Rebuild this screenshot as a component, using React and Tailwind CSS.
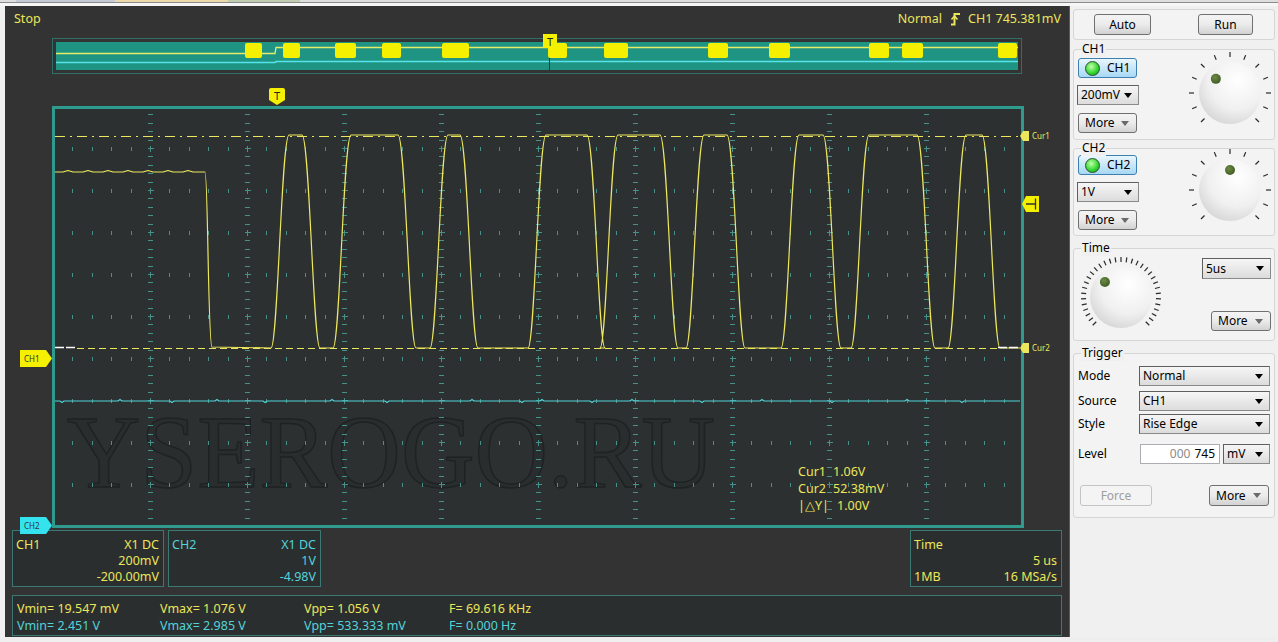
import React from 'react';

const YEL = '#ece65c';
const CYA = '#52d3da';

function buildGrid() {
  const els = [];
  for (let i = 1; i <= 9; i++) {
    const x = 53 + 97 * i + 0.5;
    for (let k = 1; k < 50; k++) {
      if (k % 5 === 0) continue;
      const y = Math.round(106 + 8.4 * k) + 0.5;
      if (y > 524) break;
      els.push(<line key={`v${i}-${k}`} x1={x - 2.5} x2={x + 2.5} y1={y} y2={y} />);
    }
  }
  for (let j = 1; j <= 9; j++) {
    const y = 106 + 42 * j + 0.5;
    for (let k = 1; k < 52; k++) {
      const x = Math.round(53 + 19.4 * k) + 0.5;
      if (x > 1019) break;
      if (k % 5 === 0) {
        els.push(<path key={`p${j}-${k}`} d={`M${x - 3},${y}H${x + 3}M${x},${y - 3}V${y + 3}`} />);
      } else {
        els.push(<line key={`h${j}-${k}`} x1={x} x2={x} y1={y - 2} y2={y + 2} />);
      }
    }
  }
  return (
    <g stroke="#46918a" strokeWidth="1" shapeRendering="crispEdges">
      {els}
    </g>
  );
}

function wavePath() {
  const lo = 348;
  const hi = 135;
  let d = 'M55,172';
  for (let x = 58; x < 204; x += 5) {
    d += ` L${x},${172 + (((x * 7) % 4 === 0) ? -1.5 : 0)}`;
  }
  d += ` L205,172 C208,172 208,346 212,347 L${270},${lo}`;
  const tops = [
    [289, 302],
    [351, 398],
    [448, 460],
    [546, 587],
    [618, 660],
    [704, 727],
    [799, 823],
    [869, 917],
    [966, 982],
  ];
  const w = 18;
  tops.forEach(([a, b]) => {
    d += ` L${a - w},${lo} C${a - w * 0.62},${lo} ${a - w * 0.42},${hi} ${a},${hi} L${b},${hi} C${b + w * 0.42},${hi} ${b + w * 0.62},${lo} ${b + w},${lo}`;
  });
  d += ` L1020,${lo}`;
  return d;
}

function cyanPath() {
  let d = 'M55,401';
  const bumps = [60, 118, 170, 215, 263, 330, 385, 470, 520, 540, 590, 630, 700, 760, 830, 905, 960];
  bumps.forEach((b, i) => {
    d += ` L${b},401 L${b + 2},${i % 2 ? 399.5 : 402.5} L${b + 4},401`;
  });
  d += ' L1020,401';
  return d;
}

function Knob({ w, h, cx, cy, r = 31, ticks, tr1, tr2, dotA, dotD = 20, id }) {
  const lines = [];
  for (let i = 0; i < ticks; i++) {
    const a = ((225 - (270 * i) / (ticks - 1)) * Math.PI) / 180;
    lines.push(
      <line
        key={i}
        x1={cx + tr1 * Math.cos(a)}
        y1={cy - tr1 * Math.sin(a)}
        x2={cx + tr2 * Math.cos(a)}
        y2={cy - tr2 * Math.sin(a)}
      />
    );
  }
  const da = (dotA * Math.PI) / 180;
  return (
    <svg width={w} height={h} className="shrink-0">
      <defs>
        <radialGradient id={id} cx="0.62" cy="0.3" r="0.85">
          <stop offset="0" stopColor="#ffffff" />
          <stop offset="0.55" stopColor="#f0f0f0" />
          <stop offset="1" stopColor="#cdcdcd" />
        </radialGradient>
        <radialGradient id={`${id}d`} cx="0.4" cy="0.35" r="0.7">
          <stop offset="0" stopColor="#6b8a45" />
          <stop offset="1" stopColor="#3f5a22" />
        </radialGradient>
      </defs>
      <g stroke="#2a2a2a" strokeWidth="1.2">{lines}</g>
      <circle cx={cx} cy={cy} r={r} fill={`url(#${id})`} />
      <circle cx={cx + dotD * Math.cos(da)} cy={cy - dotD * Math.sin(da)} r="5" fill={`url(#${id}d)`} />
    </svg>
  );
}

function Tri({ color = '#000' }) {
  return (
    <svg width="8" height="5" className="shrink-0">
      <path d="M0 0H8L4 5Z" fill={color} />
    </svg>
  );
}

function Combo({ text, className = '' }) {
  return (
    <div
      className={`h-[20px] flex items-center justify-between pl-[3px] pr-[6px] border border-[#8a8a8a] border-t-[#5f5f5f] border-l-[#5f5f5f] bg-linear-to-b from-[#f6f6f6] to-[#dcdcdc] text-[12px] leading-none text-black ${className}`}
    >
      <span>{text}</span>
      <Tri />
    </div>
  );
}

function Btn({ children, className = '' }) {
  return (
    <div
      className={`flex items-center justify-center rounded-[3px] border border-[#707070] bg-linear-to-b from-[#f4f4f4] via-[#ebebeb] to-[#d2d2d2] text-[12px] leading-none text-black ${className}`}
    >
      {children}
    </div>
  );
}

function More({ className = '' }) {
  return (
    <div
      className={`h-[20px] flex items-center justify-between pl-[6px] pr-[7px] rounded-[3px] border border-[#707070] bg-linear-to-b from-[#f4f4f4] via-[#ebebeb] to-[#d2d2d2] text-[12px] leading-none text-black ${className}`}
    >
      <span>More</span>
      <Tri color="#6a6a6a" />
    </div>
  );
}

function Toggle({ label }) {
  return (
    <div className="w-[59px] h-[20px] rounded-[3px] border border-[#3c7fb1] bg-linear-to-b from-[#e9f6fd] to-[#a7d8f4] flex items-center pl-[6px] gap-[7px] text-[12px] leading-none text-black">
      <span className="w-[15px] h-[15px] rounded-full border border-[#2d4d2d] bg-[radial-gradient(circle_at_40%_35%,#c6ffa8,#36d936_55%,#129612)]" />
      <span>{label}</span>
    </div>
  );
}

function Group({ title, className = '', children }) {
  return (
    <div className={`relative rounded-[3px] border border-[#d6d6d6] bg-[#f3f3f3] ${className}`}>
      {title && (
        <span className="absolute left-[7px] top-[-9px] px-[1px] bg-[#f0f0f0] text-[12px] leading-[16px] text-black">
          {title}
        </span>
      )}
      {children}
    </div>
  );
}

function InfoBox({ color, rows, className = '' }) {
  return (
    <div className={`h-[57px] border border-[#3c7874] bg-[#2b2e2e] pt-[6px] pl-[3px] pr-[4px] ${className}`} style={{ color }}>
      {rows.map((r, i) => (
        <div key={i} className="flex justify-between leading-[16px]">
          <span>{r[0]}</span>
          <span>{r[1]}</span>
        </div>
      ))}
    </div>
  );
}

function Marker({ fill, label, className }) {
  return (
    <div className={`absolute w-[32px] h-[17px] ${className}`}>
      <svg width="32" height="17" className="absolute inset-0">
        <path d="M0 0H26L32 8.5L26 17H0Z" fill={fill} />
      </svg>
      <span className="absolute left-[4px] top-[3px] text-[8px] leading-[11px] text-[#333]">{label}</span>
    </div>
  );
}

function CurMarker({ label, className }) {
  return (
    <div className={`absolute flex items-center gap-[3px] ${className}`}>
      <svg width="9" height="10">
        <path d="M0 5L3 0H9V10H3Z" fill={YEL} />
      </svg>
      <span className="text-[8px] leading-[10px]" style={{ color: YEL }}>
        {label}
      </span>
    </div>
  );
}

export default function App() {
  return (
    <div className="w-[1278px] h-[642px] overflow-hidden bg-[#f0f0f0] flex flex-col font-['Noto_Sans',sans-serif]">
      {/* window top strip */}
      <div className="h-[6px] shrink-0 flex flex-col">
        <div className="h-[2px] bg-[#dedede] flex">
          <div className="w-[16px]" />
          <div className="w-[99px] bg-[#c4cbd6]" />
          <div className="w-[113px] bg-[#eed8a8]" />
          <div className="w-[72px] bg-[#c0cdb2]" />
        </div>
        <div className="h-[1px] bg-[#8c8c8c]" />
        <div className="h-[3px] bg-[#f6f6f6]" />
      </div>

      <div className="flex h-[631px] shrink-0">
        {/* LEFT: scope display */}
        <div className="ml-[5px] w-[1064px] bg-[#333333] flex flex-col text-[12.5px]">
          <div className="h-[32px] pt-[5px] pl-[9px] pr-[8px] flex items-start justify-between leading-[16px]" style={{ color: YEL }}>
            <span>Stop</span>
            <div className="h-[16px] flex items-center">
              <span>Normal</span>
              <svg width="11" height="16" className="ml-[8px] mr-[7px]">
                <path d="M1 13.5H4.5V3H10" stroke={YEL} strokeWidth="2" fill="none" />
                <path d="M1.5 8.5L4.5 5L7.5 8.5" stroke={YEL} strokeWidth="1.6" fill="none" />
              </svg>
              <span>CH1 745.381mV</span>
            </div>
          </div>

          {/* overview strip */}
          <div className="relative ml-[47px] w-[970px] h-[36px] border border-[#2f6e69] p-[3px]">
            <div className="w-full h-full bg-[#1f9483]">
              <svg width="962" height="28" viewBox="56 42 962 28" className="block">
                <path d="M56,53.5 L275,53.5 L276,47.5 L1018,47.5" stroke="#e6ec6a" strokeWidth="1.3" fill="none" />
                <path d="M56,62.5 L275,62.5 L276,61.5 L1018,61.5" stroke="#56e3ea" strokeWidth="1.6" fill="none" />
                <line x1="549.5" x2="549.5" y1="48" y2="70" stroke="#16403b" strokeWidth="1" />
                {[
                  [245, 262],
                  [283, 300],
                  [335, 356],
                  [382, 401],
                  [442, 469],
                  [548, 567],
                  [604, 628],
                  [708, 728],
                  [769, 790],
                  [869, 889],
                  [902, 923],
                  [998, 1017],
                ].map(([a, b]) => (
                  <rect key={a} x={a} y={43} width={b - a} height={15} rx="2" fill="#f4f000" />
                ))}
              </svg>
            </div>
            <div className="absolute left-[490px] top-[-5px] w-[14px] h-[14px] bg-[#f4f000] flex items-center justify-center text-[11px] leading-none text-[#222]">
              T
            </div>
          </div>

          {/* main plot */}
          <div className="relative mt-[32px] ml-[47px] w-[972px] h-[422px] border-[3px] border-[#2f9a8e] bg-[#2c3030]">
            <svg width="966" height="416" viewBox="55 109 966 416" className="block">
              <text
                x="67"
                y="487"
                fontFamily="'Liberation Serif', 'DejaVu Serif', serif"
                fontSize="104"
                textLength="648"
                lengthAdjust="spacingAndGlyphs"
                fill="#2a2d2d"
                stroke="#1f2222"
                strokeWidth="1.5"
              >
                YSEROGO.RU
              </text>
              {buildGrid()}
              <line x1="55" x2="1020" y1="136.5" y2="136.5" stroke={YEL} strokeWidth="1" strokeDasharray="10 5 2 5" />
              <line x1="77" x2="1000" y1="348.5" y2="348.5" stroke={YEL} strokeWidth="1" strokeDasharray="7 4" />
              <path d={cyanPath()} stroke={CYA} strokeWidth="1.2" fill="none" />
              <path d={wavePath()} stroke="#eee85e" strokeWidth="1.2" fill="none" strokeLinejoin="round" />
              <line x1="55" x2="77" y1="347.5" y2="347.5" stroke="#ffffff" strokeWidth="1.5" strokeDasharray="9 2" />
              <line x1="998" x2="1020" y1="347.5" y2="347.5" stroke="#ffffff" strokeWidth="1.5" strokeDasharray="9 2" />
            </svg>

            {/* cursor readout */}
            <div className="absolute left-[743px] top-[354px] leading-[17px]" style={{ color: YEL }}>
              <div className="flex">
                <span className="w-[35px]">Cur1</span>
                <span>1.06V</span>
              </div>
              <div className="flex">
                <span className="w-[35px]">Cur2</span>
                <span>52.38mV</span>
              </div>
              <div className="flex">
                <span className="w-[39px]">|△Y|</span>
                <span>1.00V</span>
              </div>
            </div>

            {/* overlays: markers */}
            <div className="absolute left-[214px] top-[-21px] w-[16px] h-[17px]">
              <svg width="16" height="17" className="absolute inset-0">
                <path d="M0 2Q0 0 2 0H14Q16 0 16 2V12L8 17L0 12Z" fill="#f4f000" />
              </svg>
              <span className="absolute inset-x-0 top-[1px] text-center text-[11px] leading-[13px] text-[#222]">T</span>
            </div>
            <Marker fill="#f4f000" label="CH1" className="left-[-35px] top-[241px]" />
            <Marker fill="#35e3ee" label="CH2" className="left-[-35px] top-[408px]" />
            <CurMarker label="Cur1" className="left-[965px] top-[22px]" />
            <CurMarker label="Cur2" className="left-[965px] top-[234px]" />
            <div className="absolute left-[967px] top-[87px]">
              <svg width="17" height="16">
                <path d="M0 8L4 0H17V16H4Z" fill="#f4f000" />
                <path d="M4 8H13M13.5 2.5V13.5" stroke="#333" strokeWidth="1.3" />
              </svg>
            </div>
          </div>

          {/* info boxes */}
          <div className="mt-[2px] flex">
            <InfoBox
              color={YEL}
              className="ml-[7px] w-[152px]"
              rows={[
                ['CH1', 'X1  DC'],
                ['', '200mV'],
                ['', '-200.00mV'],
              ]}
            />
            <InfoBox
              color={CYA}
              className="ml-[4px] w-[153px]"
              rows={[
                ['CH2', 'X1  DC'],
                ['', '1V'],
                ['', '-4.98V'],
              ]}
            />
            <InfoBox
              color={YEL}
              className="ml-auto mr-[7px] w-[152px]"
              rows={[
                ['Time', ''],
                ['', '5 us'],
                ['1MB', '16 MSa/s'],
              ]}
            />
          </div>

          {/* measurements */}
          <div className="mt-[8px] mx-[7px] h-[41px] border border-[#3c7874] bg-[#2b2e2e] pt-[4px] pl-[4px]">
            <div className="grid grid-cols-[143px_144px_145px_1fr] leading-[17px] whitespace-pre" style={{ color: YEL }}>
              <span>Vmin= 19.547 mV</span>
              <span>Vmax= 1.076 V</span>
              <span>Vpp= 1.056 V</span>
              <span>F= 69.616 KHz</span>
            </div>
            <div className="grid grid-cols-[143px_144px_145px_1fr] leading-[17px] whitespace-pre" style={{ color: CYA }}>
              <span>Vmin= 2.451 V</span>
              <span>Vmax= 2.985 V</span>
              <span>Vpp= 533.333 mV</span>
              <span>F= 0.000 Hz</span>
            </div>
          </div>
        </div>

        {/* RIGHT: control panel */}
        <div className="flex-1 bg-[#f0f0f0] border-l border-[#5a5a5a] pl-[3px] pr-[3px] pt-[3px] flex flex-col">
          <Group className="h-[31px] flex items-center">
            <Btn className="ml-[20px] w-[57px] h-[21px]">Auto</Btn>
            <Btn className="ml-[47px] w-[55px] h-[21px]">Run</Btn>
          </Group>

          <Group title="CH1" className="mt-[9px] h-[91px] flex">
            <div className="flex flex-col pl-[4px] pt-[8px]">
              <Toggle label="CH1" />
              <Combo text="200mV" className="mt-[7px] w-[62px] ml-[-1px]" />
              <More className="mt-[8px] w-[59px]" />
            </div>
            <div className="ml-auto">
              <Knob id="k1" w={88} h={89} cx={44} cy={43} ticks={13} tr1={36} tr2={41} dotA={135} />
            </div>
          </Group>

          <Group title="CH2" className="mt-[8px] h-[88px] flex">
            <div className="flex flex-col pl-[4px] pt-[6px]">
              <Toggle label="CH2" />
              <Combo text="1V" className="mt-[7px] w-[62px] ml-[-1px]" />
              <More className="mt-[8px] w-[59px]" />
            </div>
            <div className="ml-auto">
              <Knob id="k2" w={88} h={86} cx={44} cy={41} ticks={13} tr1={36} tr2={41} dotA={90} />
            </div>
          </Group>

          <Group title="Time" className="mt-[12px] h-[93px] flex">
            <Knob id="k3" w={96} h={91} cx={47} cy={48} ticks={33} tr1={35} tr2={40} dotA={137} dotD={22} />
            <div className="flex-1 flex flex-col items-end pr-[3px] pt-[9px]">
              <Combo text="5us" className="w-[69px] h-[21px]" />
              <More className="mt-[32px] w-[60px]" />
            </div>
          </Group>

          <Group title="Trigger" className="mt-[12px] h-[165px] px-[4px] pt-[12px] flex flex-col text-[12px] text-black">
            <div className="flex items-center h-[20px]">
              <span className="w-[61px]">Mode</span>
              <Combo text="Normal" className="w-[131px]" />
            </div>
            <div className="mt-[5px] flex items-center h-[20px]">
              <span className="w-[61px]">Source</span>
              <Combo text="CH1" className="w-[131px]" />
            </div>
            <div className="mt-[3px] flex items-center h-[20px]">
              <span className="w-[61px]">Style</span>
              <Combo text="Rise Edge" className="w-[131px]" />
            </div>
            <div className="mt-[10px] flex items-center h-[20px]">
              <span className="w-[62px]">Level</span>
              <div className="w-[80px] h-[20px] bg-white border border-[#abadb3] flex items-center justify-end pr-[4px] leading-none">
                <span className="text-[#8a8a8a]">000</span>
                <span className="ml-[4px]">745</span>
              </div>
              <Combo text="mV" className="ml-[3px] w-[47px]" />
            </div>
            <div className="mt-[21px] flex items-center">
              <div className="ml-[2px] w-[72px] h-[21px] rounded-[3px] border border-[#c4c4c4] bg-[#f4f4f4] flex items-center justify-center text-[#9d9d9d] leading-none">
                Force
              </div>
              <More className="ml-auto mr-[1px] w-[60px] h-[21px]" />
            </div>
          </Group>
        </div>
      </div>

      <div className="flex-1 bg-[#eeeeee]" />
    </div>
  );
}
